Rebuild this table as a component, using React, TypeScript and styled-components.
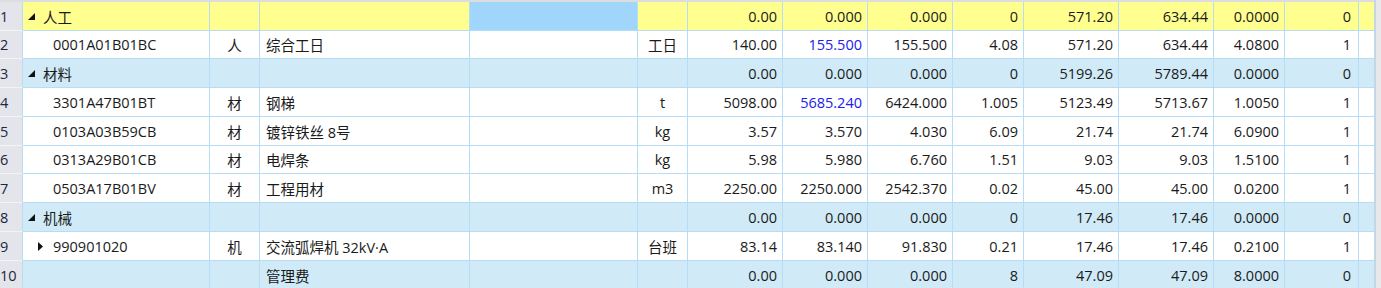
import * as React from 'react';
import styled, { createGlobalStyle } from 'styled-components';

const GlobalStyle = createGlobalStyle`
  html, body { margin: 0; padding: 0; background: #fff; }
  body {
    font-family: "Open Sans", "Noto Sans CJK SC", sans-serif;
    font-size: 14.5px;
    color: #1a1a1a;
  }
`;

const COLS = '23px 187px 50px 210px 168px 50px 95px 85px 85px 71px 95px 95px 71px 74px 16px';
const LINE = '#b7dcf5';

type Kind = 'group' | 'item' | 'sub';
type Tone = 'yellow' | 'blue' | 'white';

interface RowData {
  kind: Kind;
  tone: Tone;
  h: number;
  code: string;
  type: string;
  name: string;
  unit: string;
  nums: string[];
  blue?: boolean;
  selected?: boolean;
}

const rows: RowData[] = [
  { kind: 'group', tone: 'yellow', h: 29, code: '人工', type: '', name: '', unit: '', selected: true,
    nums: ['0.00', '0.000', '0.000', '0', '571.20', '634.44', '0.0000', '0'] },
  { kind: 'item', tone: 'white', h: 28, code: '0001A01B01BC', type: '人', name: '综合工日', unit: '工日', blue: true,
    nums: ['140.00', '155.500', '155.500', '4.08', '571.20', '634.44', '4.0800', '1'] },
  { kind: 'group', tone: 'blue', h: 29, code: '材料', type: '', name: '', unit: '',
    nums: ['0.00', '0.000', '0.000', '0', '5199.26', '5789.44', '0.0000', '0'] },
  { kind: 'item', tone: 'white', h: 29, code: '3301A47B01BT', type: '材', name: '钢梯', unit: 't', blue: true,
    nums: ['5098.00', '5685.240', '6424.000', '1.005', '5123.49', '5713.67', '1.0050', '1'] },
  { kind: 'item', tone: 'white', h: 29, code: '0103A03B59CB', type: '材', name: '镀锌铁丝 8号', unit: 'kg',
    nums: ['3.57', '3.570', '4.030', '6.09', '21.74', '21.74', '6.0900', '1'] },
  { kind: 'item', tone: 'white', h: 28, code: '0313A29B01CB', type: '材', name: '电焊条', unit: 'kg',
    nums: ['5.98', '5.980', '6.760', '1.51', '9.03', '9.03', '1.5100', '1'] },
  { kind: 'item', tone: 'white', h: 29, code: '0503A17B01BV', type: '材', name: '工程用材', unit: 'm3',
    nums: ['2250.00', '2250.000', '2542.370', '0.02', '45.00', '45.00', '0.0200', '1'] },
  { kind: 'group', tone: 'blue', h: 29, code: '机械', type: '', name: '', unit: '',
    nums: ['0.00', '0.000', '0.000', '0', '17.46', '17.46', '0.0000', '0'] },
  { kind: 'sub', tone: 'white', h: 29, code: '990901020', type: '机', name: '交流弧焊机 32kV·A', unit: '台班',
    nums: ['83.14', '83.140', '91.830', '0.21', '17.46', '17.46', '0.2100', '1'] },
  { kind: 'item', tone: 'blue', h: 29, code: '', type: '', name: '管理费', unit: '',
    nums: ['0.00', '0.000', '0.000', '8', '47.09', '47.09', '8.0000', '0'] },
];

const toneBg: Record<Tone, string> = {
  yellow: '#ffff8f',
  blue: '#d0ebf7',
  white: '#ffffff',
};

const Page = styled.div`
  display: flex;
  width: 1381px;
  height: 288px;
  overflow: hidden;
`;

const Sheet = styled.div`
  display: flex;
  flex-direction: column;
  width: 1375px;
`;

const TopStrip = styled.div`
  height: 2px;
  background: #dcdde0;
  flex: none;
`;

const Row = styled.div<{ $tone: Tone; $h: number }>`
  display: grid;
  grid-template-columns: ${COLS};
  height: ${(p) => p.$h}px;
  flex: none;
  background: ${(p) => toneBg[p.$tone]};
`;

const Cell = styled.div<{ $align?: 'left' | 'center' | 'right'; $pad?: number; $sel?: boolean }>`
  display: flex;
  align-items: center;
  justify-content: ${(p) => (p.$align === 'right' ? 'flex-end' : p.$align === 'center' ? 'center' : 'flex-start')};
  padding: 0 ${(p) => (p.$align === 'right' ? p.$pad ?? 5 : 0)}px 0 ${(p) => (p.$align === 'right' ? 0 : p.$pad ?? 0)}px;
  border-right: 1px solid ${LINE};
  border-bottom: 1px solid ${LINE};
  background: ${(p) => (p.$sel ? '#a0d5fc' : 'transparent')};
  white-space: nowrap;
  overflow: hidden;
  min-width: 0;
`;

const RowNum = styled.div`
  display: flex;
  align-items: center;
  padding-left: 0;
  background: #e3e5ea;
  border-right: 1px solid ${LINE};
  border-bottom: 1px solid #f3f4f6;
  color: #1c2544;
  white-space: nowrap;
  overflow: hidden;
`;

const Num = styled.span<{ $blue?: boolean }>`
  color: ${(p) => (p.$blue ? '#2020ee' : '#1a1a1a')};
`;

const Icon = styled.svg`
  flex: none;
  display: block;
`;

const Gutter = styled.div`
  width: 6px;
  background: #e8e8ea;
  border-left: 1px solid #cfd3d8;
  box-sizing: border-box;
`;

const Expanded = () => (
  <Icon width="7" height="7" viewBox="0 0 7 7" style={{ marginRight: 8, marginTop: 1 }}>
    <polygon points="7,0 7,7 0,7" fill="#111" />
  </Icon>
);

const Collapsed = () => (
  <Icon width="5" height="9" viewBox="0 0 5 9" style={{ marginRight: 10 }}>
    <polygon points="0,0 5,4.5 0,9" fill="#111" />
  </Icon>
);

const CodeCell = ({ r }: { r: RowData }) => {
  if (r.kind === 'group') {
    return (
      <Cell $pad={5}>
        <Expanded />
        {r.code}
      </Cell>
    );
  }
  if (r.kind === 'sub') {
    return (
      <Cell $pad={15}>
        <Collapsed />
        {r.code}
      </Cell>
    );
  }
  return <Cell $pad={30}>{r.code}</Cell>;
};

export default function App() {
  return (
    <>
      <GlobalStyle />
      <Page>
        <Sheet>
          <TopStrip />
          {rows.map((r, i) => (
            <Row key={i} $tone={r.tone} $h={r.h}>
              <RowNum>{i + 1}</RowNum>
              <CodeCell r={r} />
              <Cell $align="center">{r.type}</Cell>
              <Cell $pad={6}>{r.name}</Cell>
              <Cell $sel={r.selected} />
              <Cell $align="center">{r.unit}</Cell>
              {r.nums.map((n, j) => (
                <Cell key={j} $align="right" $pad={j === 7 ? 7 : 5}>
                  <Num $blue={r.blue && j === 1}>{n}</Num>
                </Cell>
              ))}
              <Cell />
            </Row>
          ))}
        </Sheet>
        <Gutter />
      </Page>
    </>
  );
}
